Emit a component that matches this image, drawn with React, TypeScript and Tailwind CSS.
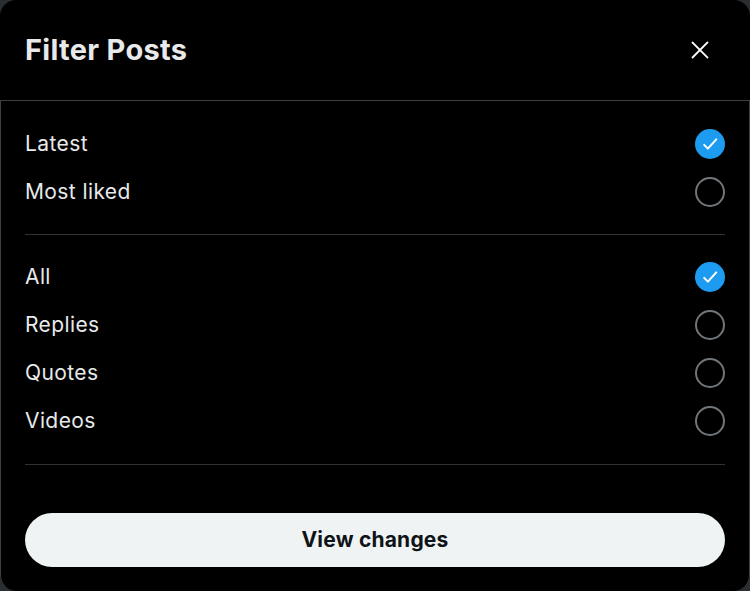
import { useState } from 'react'

type Option = { key: string; label: string }

const sortOptions: Option[] = [
  { key: 'latest', label: 'Latest' },
  { key: 'liked', label: 'Most liked' },
]

const typeOptions: Option[] = [
  { key: 'all', label: 'All' },
  { key: 'replies', label: 'Replies' },
  { key: 'quotes', label: 'Quotes' },
  { key: 'videos', label: 'Videos' },
]

function Check({ on }: { on: boolean }) {
  if (!on) {
    return <div className="h-[30px] w-[30px] rounded-full border-[2.5px] border-[#71767b]" />
  }
  return (
    <div className="flex h-[30px] w-[30px] items-center justify-center rounded-full bg-[#1d9bf0]">
      <svg viewBox="0 0 24 24" className="h-[20px] w-[20px]" fill="none" stroke="white" strokeWidth="2.4" strokeLinecap="round" strokeLinejoin="round">
        <path d="M5 13l4.5 4.5L19.5 6.5" />
      </svg>
    </div>
  )
}

function Row({ label, on, onClick }: { label: string; on: boolean; onClick: () => void }) {
  return (
    <button type="button" onClick={onClick} className="flex h-[48px] w-full items-center justify-between text-left">
      <span className="text-[21px] tracking-[0.4px] text-[#e7e9ea]">{label}</span>
      <Check on={on} />
    </button>
  )
}

export default function App() {
  const [sort, setSort] = useState('latest')
  const [type, setType] = useState('all')

  return (
    <div className="h-[591px] w-[750px] bg-[#2b2e31]" style={{ fontFamily: 'Inter, "Noto Sans", sans-serif' }}>
      <div className="flex h-full flex-col rounded-2xl bg-black">
        <div className="flex h-[100px] shrink-0 items-center justify-between pl-[25px] pr-[39px]">
          <h1 className="text-[29px] font-bold tracking-[0.3px] text-[#e7e9ea]">Filter Posts</h1>
          <svg viewBox="0 0 24 24" className="h-[22px] w-[22px]" fill="none" stroke="white" strokeWidth="2" strokeLinecap="square">
            <path d="M4 4l16 16M20 4L4 20" />
          </svg>
        </div>

        <div className="flex flex-1 flex-col rounded-b-2xl border-x border-t border-[#3e4144] px-[24px]">
          <div className="pt-[19px]">
            {sortOptions.map((o) => (
              <Row key={o.key} label={o.label} on={sort === o.key} onClick={() => setSort(o.key)} />
            ))}
          </div>
          <div className="mt-[18px] h-px bg-[#2f3336]" />
          <div className="pt-[18px]">
            {typeOptions.map((o) => (
              <Row key={o.key} label={o.label} on={type === o.key} onClick={() => setType(o.key)} />
            ))}
          </div>
          <div className="mt-[19px] h-px bg-[#2f3336]" />
          <button type="button" className="mt-[48px] h-[54px] w-full rounded-full bg-[#eff3f4] text-[21px] font-bold tracking-[0.2px] text-[#0f1419]">
            View changes
          </button>
        </div>
      </div>
    </div>
  )
}
